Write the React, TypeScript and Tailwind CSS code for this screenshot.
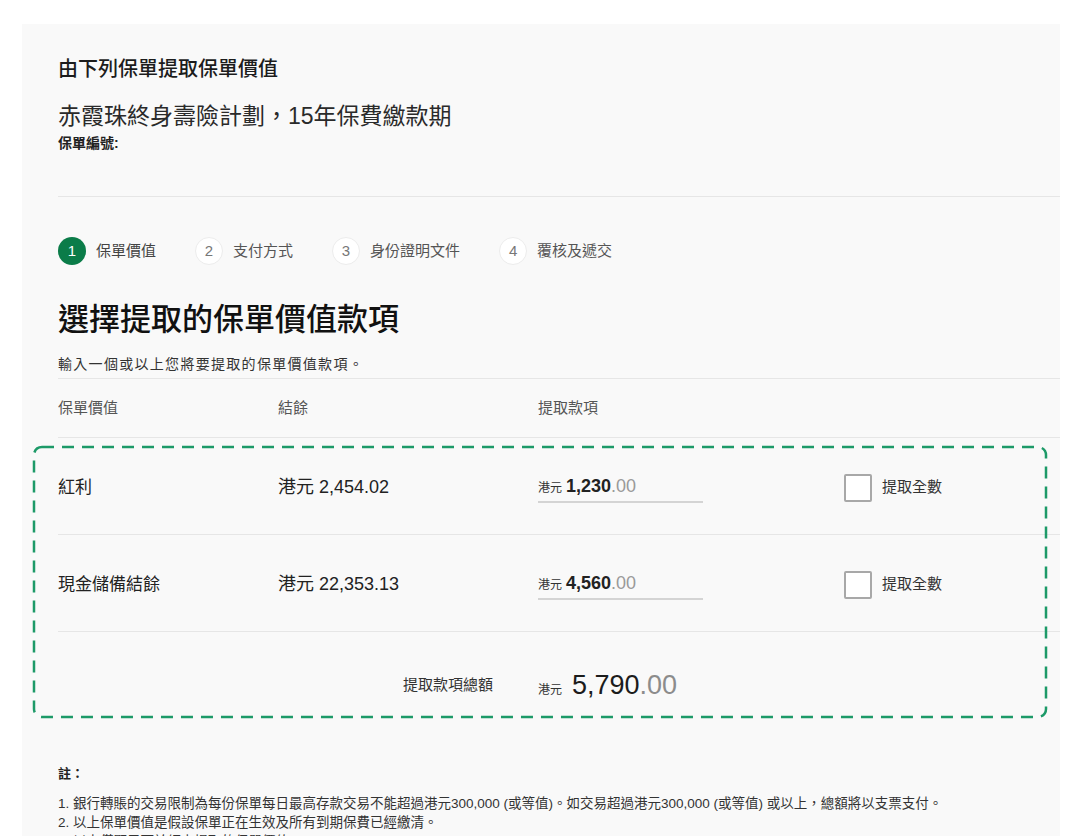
import React from 'react';

const STEPS = [
  { n: 1, label: '保單價值', active: true },
  { n: 2, label: '支付方式', active: false },
  { n: 3, label: '身份證明文件', active: false },
  { n: 4, label: '覆核及遞交', active: false },
];

const ROWS = [
  { name: '紅利', balance: '港元 2,454.02', amount: '1,230' },
  { name: '現金儲備結餘', balance: '港元 22,353.13', amount: '4,560' },
];

const NOTES = [
  '1. 銀行轉賬的交易限制為每份保單每日最高存款交易不能超過港元300,000 (或等值)。如交易超過港元300,000 (或等值) 或以上，總額將以支票支付。',
  '2. 以上保單價值是假設保單正在生效及所有到期保費已經繳清。',
  '3. 以上僅顯示可於網上提取的保單價值。',
];

function Stepper() {
  return (
    <div className="flex items-center h-[28px]">
      {STEPS.map((s) => (
        <div key={s.n} className="flex items-center mr-[39px]">
          <span
            className={
              s.active
                ? 'w-[28px] h-[28px] rounded-full bg-[#0b7c49] text-white flex items-center justify-center text-[15px]'
                : 'w-[28px] h-[28px] rounded-full bg-white border border-[#ececec] text-[#777] flex items-center justify-center text-[15px]'
            }
          >
            {s.n}
          </span>
          <span className={`ml-[10px] text-[15px] ${s.active ? 'text-[#444]' : 'text-[#555]'}`}>{s.label}</span>
        </div>
      ))}
    </div>
  );
}

function AmountInput({ whole }: { whole: string }) {
  return (
    <div className="w-[165px] border-b-2 border-[#d4d4d4] pb-[1px] flex items-baseline">
      <span className="text-[12px] text-[#333] mr-[4px]">港元</span>
      <span className="text-[18px] font-semibold text-[#222]">{whole}</span>
      <span className="text-[18px] text-[#9a9a9a]">.00</span>
    </div>
  );
}

export default function App() {
  return (
    <div
      className="min-h-[836px] bg-white pt-[24px] pl-[22px] pr-[20px] text-[#222]"
      style={{ fontFamily: '"Liberation Sans", "Noto Sans CJK TC", sans-serif' }}
    >
      <div className="bg-[#f9f9f9] pl-[36px] pb-[40px]">
        {/* policy header */}
        <div className="pt-[33px] h-[173px] border-b border-[#e6e6e6]">
          <h2 className="text-[20px] leading-[24px] font-medium text-[#1c1c1c]">由下列保單提取保單價值</h2>
          <p className="mt-[20px] text-[23px] leading-[30px] text-[#2a2a2a]">赤霞珠終身壽險計劃，15年保費繳款期</p>
          <p className="mt-[3px] text-[14px] leading-[18px] font-bold text-[#222]">保單編號:</p>
        </div>

        {/* steps + heading */}
        <div className="pt-[40px] pb-[5px] border-b border-[#e6e6e6]">
          <Stepper />
          <h1 className="mt-[35px] text-[31px] leading-[40px] font-medium text-[#111]">選擇提取的保單價值款項</h1>
          <p className="mt-[15px] text-[14px] leading-[18px] tracking-[1.3px] text-[#333]">輸入一個或以上您將要提取的保單價值款項。</p>
        </div>

        {/* column headers */}
        <div className="grid grid-cols-[220px_260px_306px_1fr] items-center h-[59px] border-b border-[#e6e6e6] text-[15px] text-[#555]">
          <span>保單價值</span>
          <span>結餘</span>
          <span>提取款項</span>
          <span />
        </div>

        {/* value rows */}
        <div className="relative">
          {ROWS.map((r) => (
            <div
              key={r.name}
              className="grid grid-cols-[220px_260px_306px_1fr] items-center h-[97px] pt-[3px] border-b border-[#e6e6e6]"
            >
              <span className="text-[17px] text-[#222]">{r.name}</span>
              <span className="text-[18px] text-[#222]">{r.balance}</span>
              <AmountInput whole={r.amount} />
              <label className="flex items-center">
                <span className="w-[28px] h-[28px] bg-white border-2 border-[#a8a8a8] rounded-[2px]" />
                <span className="ml-[10px] text-[15px] text-[#333]">提取全數</span>
              </label>
            </div>
          ))}
          <div className="grid grid-cols-[220px_260px_306px_1fr] items-center h-[106px]">
            <span />
            <span className="text-right pr-[45px] text-[15px] text-[#333]">提取款項總額</span>
            <div className="flex items-baseline">
              <span className="text-[12px] text-[#333] mr-[10px]">港元</span>
              <span className="text-[27px] text-[#1c1c1c]">5,790</span>
              <span className="text-[27px] text-[#8c8c8c]">.00</span>
            </div>
            <span />
          </div>

          {/* highlight annotation */}
          <svg className="absolute top-[9px] left-[-24px] h-[270px] w-[1012px] overflow-visible pointer-events-none">
            <rect
              x="0"
              y="0"
              width="1012"
              height="270"
              rx="8"
              fill="none"
              stroke="#1d9a68"
              strokeWidth="2.5"
              strokeDasharray="12 8"
            />
          </svg>
        </div>

        {/* notes */}
        <div className="mt-[27px]">
          <p className="text-[13px] leading-[18px] font-bold text-[#222]">註：</p>
          <ul className="mt-[11px] text-[13.5px] leading-[19px] text-[#333]">
            {NOTES.map((n) => (
              <li key={n}>{n}</li>
            ))}
          </ul>
        </div>
      </div>
    </div>
  );
}
